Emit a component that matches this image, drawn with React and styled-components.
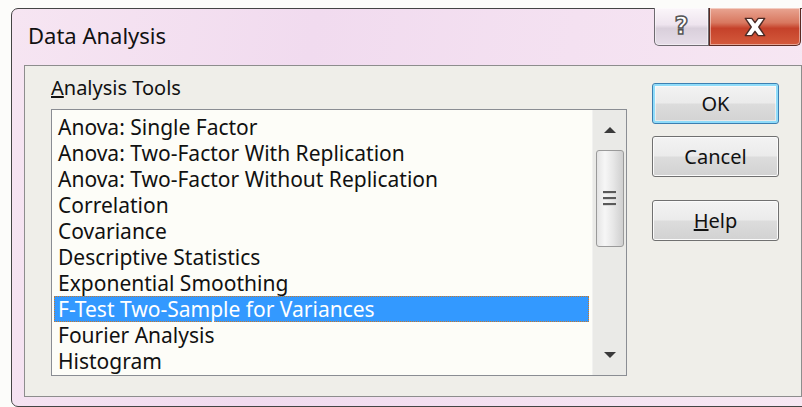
import React from "react";
import styled, { createGlobalStyle } from "styled-components";

const GlobalStyle = createGlobalStyle`
  html, body {
    margin: 0;
    padding: 0;
    overflow: hidden;
    background: #fcfcfa;
  }
`;

const Page = styled.div`
  width: 802px;
  height: 407px;
  overflow: hidden;
  padding: 8px 0 0 11px;
  box-sizing: border-box;
  font-family: "Noto Sans", "Open Sans", sans-serif;
  color: #111;
`;

const Window = styled.div`
  width: 804px;
  height: 399px;
  box-sizing: border-box;
  border: 1px solid #444;
  border-radius: 7px;
  background: linear-gradient(100deg, #f6e5f2 0%, #f1dbef 35%, #f4e1f1 65%, #f7e8f3 100%);
  display: flex;
  flex-direction: column;
`;

const TitleBar = styled.div`
  height: 56px;
  display: flex;
  align-items: flex-start;
  padding-left: 16px;
  flex-shrink: 0;
`;

const Title = styled.div`
  margin-top: 12px;
  font-size: 22px;
  line-height: 28px;
`;

const CaptionButtons = styled.div`
  margin-left: auto;
  margin-right: 13px;
  margin-top: -1px;
  display: flex;
  height: 38px;
`;

const CaptionButton = styled.div`
  width: ${(p) => p.$w}px;
  height: 100%;
  box-sizing: border-box;
  display: flex;
  align-items: center;
  justify-content: center;
  border: 1px solid ${(p) => (p.$close ? "#5c2a22" : "#6e6a70")};
  border-top: none;
  border-radius: ${(p) => (p.$close ? "0 0 5px 0" : "0 0 0 5px")};
  background: ${(p) =>
    p.$close
      ? "linear-gradient(#e9a592 0%, #d8775f 40%, #c5412a 55%, #d45a3c 100%)"
      : "linear-gradient(#fbf6fa 0%, #eee4ee 45%, #d9cfdb 55%, #e6dde8 100%)"};
  box-shadow: inset 0 0 0 1px rgba(255, 255, 255, 0.45);
`;

const HelpGlyph = styled.span`
  font-family: "DejaVu Sans", sans-serif;
  font-weight: bold;
  font-size: 24px;
  color: #fff;
  -webkit-text-stroke: 1.5px #555;
  margin-top: -2px;
`;

const Client = styled.div`
  margin: 0 12px 0 12px;
  height: 332px;
  box-sizing: border-box;
  border: 1px solid #8d8d8d;
  background: #efeee9;
  display: flex;
  padding: 0 0 0 26px;
`;

const LeftCol = styled.div`
  width: 576px;
  display: flex;
  flex-direction: column;
`;

const GroupLabel = styled.div`
  padding-top: 9px;
  margin-bottom: 9px;
  font-size: 20px;
  line-height: 25px;
`;

const ListBox = styled.div`
  height: 267px;
  box-sizing: border-box;
  border: 1px solid #8a8d93;
  background: #fdfdf8;
  display: flex;
`;

const Rows = styled.div`
  flex: 1;
  padding: 4px 3px 0 2px;
`;

const Row = styled.div`
  height: 26px;
  box-sizing: border-box;
  padding-left: 3px;
  font-size: 21px;
  line-height: 24px;
  white-space: nowrap;
  color: ${(p) => (p.$selected ? "#fff" : "#111")};
  background: ${(p) => (p.$selected ? "#3399ff" : "transparent")};
  border: 1px ${(p) => (p.$selected ? "dotted #c8792a" : "solid transparent")};
`;

const ScrollBar = styled.div`
  width: 33px;
  background: #eaeae7;
  border-left: 1px solid #f2f2f0;
  display: flex;
  flex-direction: column;
  align-items: center;
`;

const ArrowBox = styled.div`
  height: 40px;
  width: 100%;
  display: flex;
  align-items: center;
  justify-content: center;
`;

const Thumb = styled.div`
  width: 28px;
  height: 97px;
  box-sizing: border-box;
  border: 1px solid #9a9a9a;
  border-radius: 3px;
  background: linear-gradient(90deg, #e4e4e4 0%, #f6f6f6 30%, #e8e8e8 60%, #cfcfcf 100%);
  display: flex;
  flex-direction: column;
  align-items: center;
  justify-content: center;
  gap: 3px;
`;

const GripLine = styled.div`
  width: 13px;
  height: 2px;
  background: #5a5a5a;
  border-bottom: 1px solid #d8d8d8;
`;

const Spacer = styled.div`
  flex: 1;
`;

const ButtonCol = styled.div`
  margin-left: 25px;
  padding-top: 17px;
  display: flex;
  flex-direction: column;
`;

const Button = styled.div`
  width: 127px;
  height: 41px;
  box-sizing: border-box;
  margin-top: ${(p) => p.$gap || 0}px;
  border: 1px solid ${(p) => (p.$default ? "#3c7fb1" : "#707070")};
  border-radius: 3px;
  background: linear-gradient(#f3f3f3 0%, #ebebeb 48%, #dcdcdc 52%, #d2d2d2 100%);
  box-shadow: ${(p) =>
    p.$default ? "inset 0 0 0 2px #8fdcfa, inset 0 0 0 3px #ffffff80" : "inset 0 0 0 1px #fbfbfb"};
  display: flex;
  align-items: center;
  justify-content: center;
  font-size: 20px;
  color: #111;
`;

const tools = [
  "Anova: Single Factor",
  "Anova: Two-Factor With Replication",
  "Anova: Two-Factor Without Replication",
  "Correlation",
  "Covariance",
  "Descriptive Statistics",
  "Exponential Smoothing",
  "F-Test Two-Sample for Variances",
  "Fourier Analysis",
  "Histogram",
];

const Arrow = ({ down }) => (
  <svg width="14" height="8" viewBox="0 0 14 8">
    <path d={down ? "M1 1 L13 1 L7 7 Z" : "M1 7 L13 7 L7 1 Z"} fill="#3a3a3a" />
  </svg>
);

const CloseIcon = () => (
  <svg width="28" height="22" viewBox="0 0 26 20">
    <path
      d="M4 2 L10 2 L13 6 L16 2 L22 2 L16.5 10 L22 18 L16 18 L13 14 L10 18 L4 18 L9.5 10 Z"
      fill="#fff"
      stroke="#4a2a25"
      strokeWidth="1.3"
      strokeLinejoin="round"
    />
  </svg>
);

export default function App() {
  return (
    <Page>
      <GlobalStyle />
      <Window>
        <TitleBar>
          <Title>Data Analysis</Title>
          <CaptionButtons>
            <CaptionButton $w={55}>
              <HelpGlyph>?</HelpGlyph>
            </CaptionButton>
            <CaptionButton $w={92} $close>
              <CloseIcon />
            </CaptionButton>
          </CaptionButtons>
        </TitleBar>
        <Client>
          <LeftCol>
            <GroupLabel>
              <u>A</u>nalysis Tools
            </GroupLabel>
            <ListBox>
              <Rows>
                {tools.map((t, i) => (
                  <Row key={t} $selected={i === 7}>
                    {t}
                  </Row>
                ))}
              </Rows>
              <ScrollBar>
                <ArrowBox>
                  <Arrow />
                </ArrowBox>
                <Thumb>
                  <GripLine />
                  <GripLine />
                  <GripLine />
                </Thumb>
                <Spacer />
                <ArrowBox>
                  <Arrow down />
                </ArrowBox>
              </ScrollBar>
            </ListBox>
          </LeftCol>
          <ButtonCol>
            <Button $default>OK</Button>
            <Button $gap={12}>Cancel</Button>
            <Button $gap={23}>
              <span>
                <u>H</u>elp
              </span>
            </Button>
          </ButtonCol>
        </Client>
      </Window>
    </Page>
  );
}
